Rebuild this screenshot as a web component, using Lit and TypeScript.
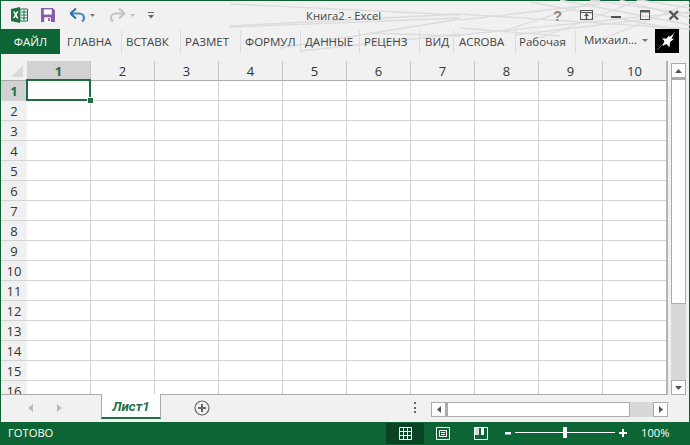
import { LitElement, html, css, svg } from "lit";
import { customElement } from "lit/decorators.js";

const COLS = ["1","2","3","4","5","6","7","8","9","10"];
const ROWS = Array.from({ length: 16 }, (_, i) => String(i + 1));
const TABS: [string, number, number][] = [
  ["ГЛАВНА", 59, 4],["ВСТАВК", 59, 4],["РАЗМЕТ", 60, 4],["ФОРМУЛ", 60, 4],["ДАННЫЕ", 59, 4],["РЕЦЕНЗ", 60, 4],["ВИД", 34, 5],["ACROBA", 62, 5],["Рабочая", 60, 3],
];
const LINES: [number, number, number, number][] = [
  [230,4,460,15],[230,26,460,14],[230,27,460,18],[280,48,460,19],[370,33,460,36],[300,51,460,34],
  [460,14,690,29],[460,20,600,4],[460,35,690,12],[530,2,680,30],[560,0,690,25],[500,32,600,0],[540,38,640,0],
  [515,35,640,20],[600,40,690,3],[640,0,690,8],[460,28,560,36],[620,0,690,18],[590,0,690,14],
];

@customElement("app-root")
export class AppRoot extends LitElement {
  static styles = css`
    :host { display: block; width: 690px; height: 445px; font-family: "Open Sans", "Liberation Sans", sans-serif; color: #444; overflow: hidden; }
    .win { position: relative; width: 690px; height: 445px; box-sizing: border-box; background: #f1f1f1; border: 1px solid #0d6535; border-bottom: 0; display: flex; flex-direction: column; }
    .deco { position: absolute; left: -1px; top: -1px; width: 690px; height: 55px; pointer-events: none; }
    .title { position: relative; height: 28px; flex: none; display: flex; align-items: center; }
    .qat { display: flex; align-items: center; margin-left: 10px; }
    .qat svg { display: block; flex: none; }
    .m13 { margin-left: 13px; }
    .m14 { margin-left: 14px; }
    .m15 { margin-left: 15px; }
    .m5 { margin-left: 5px; }
    .doc { position: absolute; left: 305px; top: 6px; font-size: 11.3px; line-height: 18px; color: #444; }
    .ctl { position: absolute; right: 0; top: 0; height: 28px; }
    .ctl svg { display: block; }
    .menu { position: relative; height: 25px; flex: none; display: flex; align-items: center; }
    .file { width: 59px; height: 25px; background: #0d6535; color: #fff; font-size: 11.5px; line-height: 25px; text-align: center; flex: none; }
    .tabs { display: flex; height: 23px; align-items: center; padding-left: 3px; }
    .tab { box-sizing: border-box; height: 23px; line-height: 23px; font-size: 11.5px; color: #444; border-right: 1px solid #dcdcdc; flex: none; white-space: nowrap; overflow: hidden; }
    .user { position: absolute; left: 583px; top: 1px; font-size: 11.5px; line-height: 20px; }
    .caret { position: absolute; left: 641px; top: 10px; width: 0; height: 0; border: 3px solid transparent; border-top: 3px solid #777; }
    .star { position: absolute; left: 654px; top: 0; width: 24px; height: 24px; background: #000; }
    .star svg { display: block; }
    .body { flex: none; display: flex; margin-top: 7px; position: relative; height: 334px; }
    .grid-wrap { width: 667px; flex: none; overflow: hidden; display: grid; grid-template-columns: 26px repeat(10, 64px); grid-auto-rows: 20px; align-content: start; border-bottom: 1px solid #ababab; border-right: 2px solid #b4b4b4; box-sizing: border-box; height: 334px; background: #fff; }
    .corner { background: #f1f1f1; position: relative; border-bottom: 1px solid #ababab; box-sizing: border-box; }
    .corner::after { content: ""; position: absolute; right: 4px; bottom: 3px; border-left: 12px solid transparent; border-bottom: 12px solid #dadada; }
    .ch { background: #f1f1f1; box-sizing: border-box; border-right: 1px solid #c6c6c6; border-bottom: 1px solid #ababab; font-size: 13px; line-height: 20px; text-align: center; color: #333; }
    .ch.on { background: #d2d2d2; color: #1f7145; font-weight: 700; }
    .rh { background: #f1f1f1; box-sizing: border-box; border-bottom: 1px solid #d4d4d4; font-size: 13px; line-height: 20px; text-align: center; color: #333; }
    .rh.on { background: #d2d2d2; color: #1f7145; font-weight: 700; }
    .cell { box-sizing: border-box; border-right: 1px solid #d4d4d4; border-bottom: 1px solid #d4d4d4; background: #fff; position: relative; }
    .cell.sel { border: 2px solid #1d6f42; margin: -2px 0 0 -1px; z-index: 1; }
    .cell.sel::after { content: ""; position: absolute; right: -5px; bottom: -5px; width: 5px; height: 5px; background: #1d6f42; border: 1px solid #fff; }
    .vs { width: 21px; flex: none; height: 334px; box-sizing: border-box; padding: 2px 0 0 3px; display: flex; flex-direction: column; }
    .vbtn { box-sizing: border-box; width: 15px; height: 15px; background: #fff; border: 1px solid #ababab; flex: none; display: flex; align-items: center; justify-content: center; }
    .vthumb { box-sizing: border-box; width: 15px; height: 226px; background: #fff; border: 1px solid #ababab; border-top-width: 2px; flex: none; }
    .vrest { flex: 1; width: 15px; background: #d8d8d8; }
    .sheets { height: 27px; flex: none; position: relative; display: flex; align-items: flex-start; }
    .nav { width: 100px; height: 25px; display: flex; align-items: center; gap: 24px; padding-left: 27px; box-sizing: border-box; flex: none; }
    .nav svg { display: block; }
    .sheet { box-sizing: border-box; width: 60px; height: 25px; margin-top: -1px; background: #fff; border: 1px solid #ababab; border-top: 0; border-bottom: 2px solid #1d6f42; color: #1f7145; font: italic 700 13.5px/25px Roboto, "Liberation Sans", sans-serif; text-align: center; flex: none; }
    .add { margin: 5px 0 0 33px; flex: none; display: block; }
    .dots { position: absolute; left: 413px; top: 7px; width: 2px; height: 11px; display: flex; flex-direction: column; justify-content: space-between; }
    .dots i { display: block; width: 2px; height: 2px; background: #666; }
    .hs { position: absolute; left: 430px; top: 7px; width: 237px; height: 15px; display: flex; }
    .hbtn { box-sizing: border-box; width: 15px; height: 15px; background: #fff; border: 1px solid #ababab; flex: none; display: flex; align-items: center; justify-content: center; }
    .hthumb { box-sizing: border-box; height: 15px; width: 185px; margin-left: -1px; background: #fff; border: 1px solid #ababab; border-left-width: 3px; flex: none; }
    .hrest { width: 23px; height: 15px; background: #d8d8d8; flex: none; }
    .status { height: 23px; flex: none; margin: 0 -1px; background: #0d6535; color: #fff; position: relative; font-size: 11.2px; line-height: 22px; }
    .ready { position: absolute; left: 8px; top: 0; }
    .vw { position: absolute; top: 1px; width: 38px; height: 21px; display: flex; align-items: center; justify-content: center; }
    .vw.on { background: #0a4424; }
    .zoom { position: absolute; left: 504px; top: 2px; }
    .pct { position: absolute; left: 641px; top: 0; }
  `;

  private deco() {
    return svg`${LINES.map(([a, b, c, d]) => svg`<line x1=${a} y1=${b} x2=${c} y2=${d} stroke="#dcdcdc" stroke-width="1.3"/>`)}`;
  }

  render() {
    return html`<div class="win">
      <svg class="deco" viewBox="0 0 690 55">${this.deco()}</svg>
      <div class="title">
        <div class="qat">
          <svg width="17" height="16" viewBox="0 0 17 16" aria-hidden="true">
            <path d="M0 2 L9 0 V16 L0 14Z" fill="#1e7145"/>
            <path d="M9 2 H16.5 V14 H9Z" fill="#fff" stroke="#1e7145"/>
            <path d="M10 5 H16 M10 8 H16 M10 11 H16 M13 2.5 V13.5" stroke="#1e7145" fill="none"/>
            <path d="M2 4.5 L3.8 4.5 L4.8 6.5 L5.8 4.3 L7.4 4.2 L5.7 7.8 L7.5 11.5 L5.8 11.4 L4.7 9.2 L3.6 11.2 L2 11 L3.9 7.8Z" fill="#fff"/>
          </svg>
          <svg class="m13" width="14" height="14" viewBox="0 0 15 15" aria-hidden="true">
            <path d="M0 0 H12.5 L15 2.5 V15 H0Z" fill="#8b5ca8"/>
            <rect x="3" y="1.5" width="8.5" height="5.5" fill="#fff"/>
            <rect x="3.5" y="10" width="7" height="5" fill="#fff"/>
            <rect x="7.5" y="11" width="2" height="3" fill="#8b5ca8"/>
          </svg>
          <svg class="m15" width="15" height="14" viewBox="0 0 15 14" aria-hidden="true">
            <path d="M1 5.5 H9 C12 5.5 14 7.5 14 10 C14 11.5 13.3 12.6 12 13.5" fill="none" stroke="#4a86c0" stroke-width="2.2"/>
            <path d="M6 0.5 L0.5 5.5 L6 10.5" fill="none" stroke="#2f6fad" stroke-width="2"/>
          </svg>
          <svg class="m5" width="5" height="3" viewBox="0 0 5 3"><path d="M0 0H5L2.5 3Z" fill="#777"/></svg>
          <svg class="m15" width="15" height="14" viewBox="0 0 15 14" aria-hidden="true">
            <path d="M14 5.5 H6 C3 5.5 1 7.5 1 10 C1 11.5 1.7 12.6 3 13.5" fill="none" stroke="#c4c4c4" stroke-width="2.2"/>
            <path d="M9 0.5 L14.5 5.5 L9 10.5" fill="none" stroke="#c4c4c4" stroke-width="2"/>
          </svg>
          <svg class="m5" width="5" height="3" viewBox="0 0 5 3"><path d="M0 0H5L2.5 3Z" fill="#c4c4c4"/></svg>
          <svg class="m13" width="6" height="7" viewBox="0 0 6 7"><path d="M0 0.5H6" stroke="#666"/><path d="M0 3H6L3 6.5Z" fill="#666"/></svg>
        </div>
        <div class="doc">Книга2 - Excel</div>
        <div class="ctl">
          <svg width="140" height="28" viewBox="0 0 140 28" aria-hidden="true">
            <text x="4" y="20" font-family="Liberation Sans" font-weight="700" font-size="15" fill="#888">?</text>
            <rect x="31.5" y="9.5" width="12" height="9" fill="none" stroke="#555"/><path d="M32 11.5H43" stroke="#555"/><path d="M37.5 12 L35 15 H36.8 V18 H38.2 V15 H40Z" fill="#555"/>
            <rect x="62" y="15" width="10" height="2" fill="#555"/>
            <rect x="91.5" y="9.5" width="9" height="9" fill="none" stroke="#555"/><path d="M91 10.5H101" stroke="#555" stroke-width="2"/>
            <path d="M120.5 10 L129 18.5 M129 10 L120.5 18.5" stroke="#555" stroke-width="2.4"/>
          </svg>
        </div>
      </div>
      <div class="menu">
        <div class="file">ФАЙЛ</div>
        <div class="tabs">
          ${TABS.map(([t, w, p]) => html`<div class="tab" style="width:${w}px;padding-left:${p}px">${t}</div>`)}
        </div>
        <div class="user">Михаил...</div>
        <div class="caret"></div>
        <div class="star">
          <svg width="24" height="24" viewBox="0 0 24 24" aria-hidden="true">
            <path d="M2 21 L20 3" stroke="#666"/>
            <path d="M19 5 L16.5 9.5 L19 10 L15 13 L14.5 18.5 L11.5 15 L7.5 17 L9.5 12 L7 9.5 L11.5 9.5 L14 6.5 L14.5 8Z" fill="#fff"/>
          </svg>
        </div>
      </div>
      <div class="body">
        <div class="grid-wrap">
          <div class="corner"></div>
          ${COLS.map((c, i) => html`<div class="ch ${i === 0 ? "on" : ""}">${c}</div>`)}
          ${ROWS.map((r, ri) => html`
            <div class="rh ${ri === 0 ? "on" : ""}">${r}</div>
            ${COLS.map((_, ci) => html`<div class="cell ${ri === 0 && ci === 0 ? "sel" : ""}"></div>`)}
          `)}
        </div>
        <div class="vs">
          <div class="vbtn"><svg width="7" height="4" viewBox="0 0 7 4"><path d="M3.5 0L7 4H0Z" fill="#555"/></svg></div>
          <div class="vthumb"></div>
          <div class="vrest"></div>
          <div class="vbtn"><svg width="7" height="4" viewBox="0 0 7 4"><path d="M0 0H7L3.5 4Z" fill="#555"/></svg></div>
        </div>
      </div>
      <div class="sheets">
        <div class="nav">
          <svg width="5" height="8" viewBox="0 0 5 8"><path d="M5 0V8L0 4Z" fill="#bbb"/></svg>
          <svg width="5" height="8" viewBox="0 0 5 8"><path d="M0 0V8L5 4Z" fill="#bbb"/></svg>
        </div>
        <div class="sheet">Лист1</div>
        <svg class="add" width="16" height="16" viewBox="0 0 16 16" aria-hidden="true">
          <circle cx="8" cy="8" r="7" fill="none" stroke="#666" stroke-width="1.2"/>
          <path d="M4 8H12M8 4V12" stroke="#666" stroke-width="2"/>
        </svg>
        <div class="dots"><i></i><i></i><i></i></div>
        <div class="hs">
          <div class="hbtn"><svg width="4" height="7" viewBox="0 0 4 7"><path d="M4 0V7L0 3.5Z" fill="#555"/></svg></div>
          <div class="hthumb"></div>
          <div class="hrest"></div>
          <div class="hbtn"><svg width="4" height="7" viewBox="0 0 4 7"><path d="M0 0V7L4 3.5Z" fill="#555"/></svg></div>
        </div>
      </div>
      <div class="status">
        <div class="ready">ГОТОВО</div>
        <div class="vw on" style="left:386px">
          <svg width="13" height="13" viewBox="0 0 13 13"><path d="M.5 .5H12.5V12.5H.5Z M4.5 .5V12.5 M8.5 .5V12.5 M.5 4.5H12.5 M.5 8.5H12.5" fill="none" stroke="#fff"/></svg>
        </div>
        <div class="vw" style="left:424px">
          <svg width="14" height="13" viewBox="0 0 14 13"><path d="M.5 .5H13.5V12.5H.5Z" fill="none" stroke="#fff"/><path d="M3.5 3.5H10.5V9.5H3.5Z M5 5.5H9 M5 7.5H9" fill="none" stroke="#fff"/></svg>
        </div>
        <div class="vw" style="left:462px">
          <svg width="14" height="13" viewBox="0 0 14 13"><path d="M.5 .5H13.5V12.5H.5Z" fill="none" stroke="#fff"/><rect x="1" y="1" width="4" height="7" fill="#cfe0d6"/><rect x="7" y="1" width="3" height="7" fill="#fff"/></svg>
        </div>
        <svg class="zoom" width="126" height="20" viewBox="0 0 126 20" aria-hidden="true">
          <rect x="1" y="8" width="6" height="2.5" fill="#fff"/>
          <rect x="11" y="8" width="100" height="1" fill="#fff"/>
          <rect x="59" y="3" width="4" height="11" fill="#fff"/>
          <path d="M115 9H123M119 5V13" stroke="#fff" stroke-width="2"/>
        </svg>
        <div class="pct">100%</div>
      </div>
    </div>`;
  }
}
